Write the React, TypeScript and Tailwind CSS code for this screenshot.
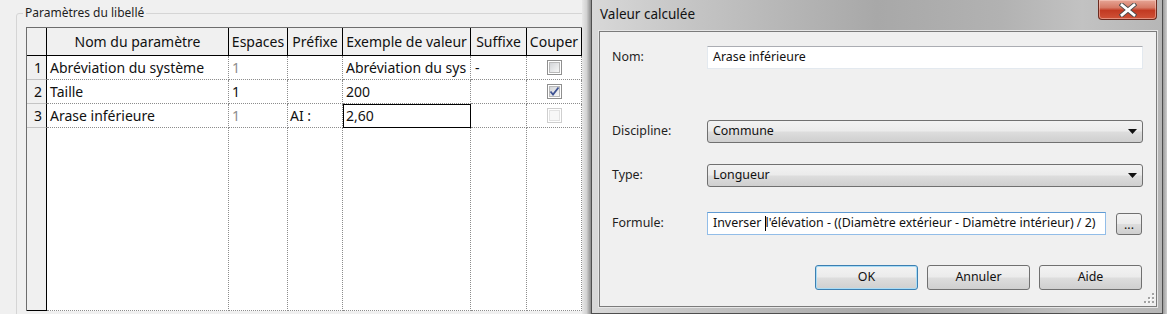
import React from "react";

type CheckState = "off" | "on" | "disabled";

interface ParamRow {
  n: number;
  nom: string;
  espaces: string;
  espacesDisabled: boolean;
  prefixe: string;
  exemple: string;
  suffixe: string;
  couper: CheckState;
}

const rows: ParamRow[] = [
  { n: 1, nom: "Abréviation du système", espaces: "1", espacesDisabled: true, prefixe: "", exemple: "Abréviation du sys", suffixe: "-", couper: "off" },
  { n: 2, nom: "Taille", espaces: "1", espacesDisabled: false, prefixe: "", exemple: "200", suffixe: "", couper: "on" },
  { n: 3, nom: "Arase inférieure", espaces: "1", espacesDisabled: true, prefixe: "AI :", exemple: "2,60", suffixe: "", couper: "disabled" },
];

const headers = [
  { label: "Nom du paramètre", w: "w-[182px]" },
  { label: "Espaces", w: "w-[59px]" },
  { label: "Préfixe", w: "w-[55px]" },
  { label: "Exemple de valeur", w: "w-[128px]" },
  { label: "Suffixe", w: "w-[56px]" },
  { label: "Couper", w: "w-[55px]" },
];

const dotted = "h-full shrink-0 border-r border-b border-dotted border-[#8c8c8c] flex items-center overflow-hidden whitespace-nowrap";

const Checkbox = ({ state }: { state: CheckState }) => {
  const disabled = state === "disabled";
  return (
    <div
      className={`flex h-[15px] w-[15px] items-center justify-center border bg-white ${
        disabled ? "border-[#cfcfcf]" : "border-[#8f8f8f]"
      }`}
    >
      <div
        className={`relative h-[11px] w-[11px] border ${
          disabled
            ? "border-[#e2e2e2] bg-[#f7f7f7]"
            : "border-[#b9b9b9] bg-[linear-gradient(135deg,#d3d5d8,#f7f7f7)]"
        }`}
      >
        {state === "on" && (
          <svg width="11" height="11" viewBox="0 0 11 11" className="absolute -left-px -top-px">
            <path d="M1.5 5.5 L4 8.5 L9.5 1.5" fill="none" stroke="#3f5393" strokeWidth="1.8" />
          </svg>
        )}
      </div>
    </div>
  );
};

const ParamTable = () => (
  <div className="w-[556px] border-l border-t border-[#6d6d6d] bg-white text-[14px] text-[#111]">
    <div className="flex h-[28px]">
      <div className="h-full w-[20px] shrink-0 border-r border-b border-black bg-[#f0f0f0]" />
      {headers.map((h) => (
        <div
          key={h.label}
          className={`${h.w} flex h-full shrink-0 items-center justify-center border-r border-b border-black bg-[#f0f0f0] whitespace-nowrap`}
        >
          {h.label}
        </div>
      ))}
    </div>
    {rows.map((r) => (
      <div key={r.n} className="flex h-[24px]">
        <div className="flex h-full w-[20px] shrink-0 items-center justify-end border-r border-b border-r-black border-b-[#c4c4c4] bg-[#f0f0f0] pr-[4px]">
          {r.n}
        </div>
        <div className={`${dotted} w-[182px] pl-[3px]`}>{r.nom}</div>
        <div className={`${dotted} w-[59px] pl-[3px] ${r.espacesDisabled ? "text-[#8d8d8d]" : "text-[#111]"}`}>{r.espaces}</div>
        <div className={`${dotted} w-[55px] pl-[2px]`}>{r.prefixe}</div>
        <div
          className={`${dotted} w-[128px] pl-[3px] ${
            r.n === 3 ? "outline outline-1 -outline-offset-1 outline-black" : ""
          }`}
        >
          {r.exemple}
        </div>
        <div className={`${dotted} w-[56px] pl-[4px]`}>{r.suffixe}</div>
        <div className={`${dotted} w-[55px] justify-center`}>
          <Checkbox state={r.couper} />
        </div>
      </div>
    ))}
    <div className="flex h-[183px]">
      <div className="h-full w-[20px] shrink-0 border-r border-b border-black bg-[#f0f0f0]" />
      {headers.map((h) => (
        <div key={h.label} className={`${dotted} ${h.w}`} />
      ))}
    </div>
  </div>
);

const LeftPanel = () => (
  <div className="h-[314px] w-[582px] shrink-0 overflow-hidden">
    <fieldset className="ml-[16px] mt-[5px] h-[330px] w-[572px] rounded-[3px] border border-[#d5d5d5]">
      <legend className="ml-[6px] px-[2px] text-[12px] leading-[16px] text-[#1e1e1e]">Paramètres du libellé</legend>
      <div className="pl-[9px] pt-[6px]">
        <ParamTable />
      </div>
    </fieldset>
  </div>
);

const CloseButton = () => (
  <div className="mr-[5px] flex h-[20px] w-[59px] items-center justify-center rounded-b-[4px] border border-t-0 border-[#6b2a1f] bg-[linear-gradient(to_bottom,#e6a595,#d67a66_40%,#c23a22_55%,#cf5238)] shadow-[inset_0_0_0_1px_rgba(255,220,210,0.45)]">
    <svg width="18" height="14" viewBox="0 0 18 14">
      <path d="M3 2 L15 12 M15 2 L3 12" stroke="#4b4b4b" strokeWidth="4.6" strokeLinecap="square" />
      <path d="M3 2 L15 12 M15 2 L3 12" stroke="#ffffff" strokeWidth="2.8" strokeLinecap="square" />
    </svg>
  </div>
);

const btn =
  "flex shrink-0 items-center justify-center rounded-[3px] border bg-[linear-gradient(to_bottom,#f3f3f3,#ebebeb_48%,#dddddd_52%,#cfcfcf)] text-[12.4px] text-[#111]";

const Label = ({ children }: { children: React.ReactNode }) => (
  <span className="w-[95px] shrink-0 text-[12.4px] text-[#1e1e1e]">{children}</span>
);

const Combo = ({ value }: { value: string }) => (
  <div className="flex h-[23px] w-[436px] items-center justify-between rounded-[3px] border border-[#707070] bg-[linear-gradient(to_bottom,#f2f2f2,#ebebeb_48%,#dddddd_52%,#cfcfcf)] pl-[5px] pr-[5px] text-[12.4px] text-[#111]">
    <span>{value}</span>
    <svg width="9" height="5" viewBox="0 0 9 5">
      <polygon points="0,0 9,0 4.5,5" fill="#111" />
    </svg>
  </div>
);

const Dialog = () => (
  <div className="flex h-[314px] w-[572px] shrink-0 flex-col border-x border-b border-[#4e4e4e] bg-[linear-gradient(to_right,#d8d8d8,#c4c4c4_18%,#a8a8a8_50%,#b2b2b2_72%,#c2c2c2_86%,#b6b6b6)]">
    <div className="flex h-[31px] shrink-0 items-start justify-between">
      <span className="pl-[8px] pt-[5px] text-[13.5px] leading-[18px] text-[#121212]">Valeur calculée</span>
      <CloseButton />
    </div>
    <div className="ml-[7px] flex h-[276px] w-[558px] flex-col border border-[#7b7b7b] bg-[#f0f0f0] pl-[12px] shadow-[0_0_0_1px_#e6e6e6]">
      <div className="mt-[14px] flex h-[23px] items-center">
        <Label>Nom:</Label>
        <div className="flex h-[23px] w-[436px] items-center border border-[#e3e9ef] border-t-[#abadb3] bg-white pl-[5px] text-[12.4px] text-[#111]">
          Arase inférieure
        </div>
      </div>
      <div className="mt-[51px] flex h-[23px] items-center">
        <Label>Discipline:</Label>
        <Combo value="Commune" />
      </div>
      <div className="mt-[21px] flex h-[23px] items-center">
        <Label>Type:</Label>
        <Combo value="Longueur" />
      </div>
      <div className="mt-[25px] flex h-[23px] items-center">
        <Label>Formule:</Label>
        <div className="flex h-[23px] w-[399px] shrink-0 items-center whitespace-pre border border-[#92bde8] border-t-[#5f9ad3] bg-white pl-[5px] text-[12.4px] text-[#111]">
          {"Inverser "}
          <span className="inline-block h-[15px] w-px bg-black" />
          {"l'élévation - ((Diamètre extérieur - Diamètre intérieur) / 2)"}
        </div>
        <div className={`${btn} ml-[10px] h-[22px] w-[26px] border-[#707070] pt-[3px] leading-none`}>...</div>
      </div>
      <div className="mt-[30px] flex h-[25px] justify-end gap-[9px] pr-[14px]">
        <div className={`${btn} h-[25px] w-[103px] border-[#3c7fb1] shadow-[inset_0_0_0_1px_#a9dcf6]`}>OK</div>
        <div className={`${btn} h-[25px] w-[103px] border-[#707070]`}>Annuler</div>
        <div className={`${btn} h-[25px] w-[103px] border-[#707070]`}>Aide</div>
      </div>
      <div className="mt-[3px] flex justify-end pr-[2px]">
        <svg width="10" height="10" viewBox="0 0 10 10">
          {[
            [8, 0],
            [8, 4],
            [4, 4],
            [8, 8],
            [4, 8],
            [0, 8],
          ].map(([x, y]) => (
            <g key={`${x}-${y}`}>
              <rect x={x + 1} y={y + 1} width="2" height="2" fill="#ffffff" />
              <rect x={x} y={y} width="2" height="2" fill="#a3a3a3" />
            </g>
          ))}
        </svg>
      </div>
    </div>
  </div>
);

export default function App() {
  return (
    <div className="flex h-[314px] w-[1167px] overflow-hidden bg-[#f0f0f0] font-['Noto_Sans',sans-serif]">
      <LeftPanel />
      <div className="h-full w-[9px] shrink-0 bg-[linear-gradient(to_right,#e8e8e8,#d2d2d2_50%,#8a8a8a)]" />
      <Dialog />
      <div className="h-full w-[4px] shrink-0 bg-[linear-gradient(to_right,#9a9a9a,#cfcfcf)]" />
    </div>
  );
}
